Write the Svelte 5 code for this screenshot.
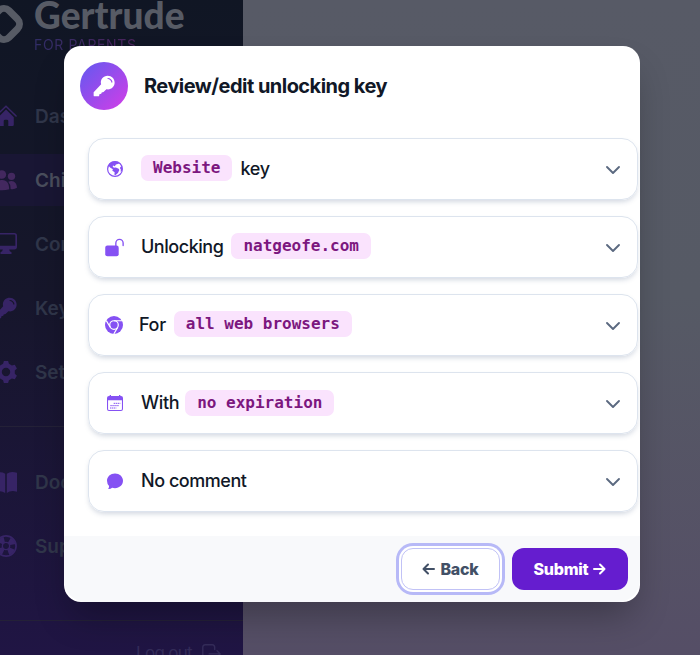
<script>
  const nav = [
    { label: 'Dashboard', icon: 'home' },
    { label: 'Children', icon: 'people', active: true },
    { label: 'Computers', icon: 'display' },
    { label: 'Keychains', icon: 'key' },
    { label: 'Settings', icon: 'gear' },
  ];
  const links = [
    { label: 'Docs', icon: 'book' },
    { label: 'Support', icon: 'life' },
  ];
  const rows = [
    { icon: 'globe', size: 16, chip: 'Website', after: 'key' },
    { icon: 'unlock', size: 19, before: 'Unlocking', chip: 'natgeofe.com' },
    { icon: 'chrome', size: 18, before: 'For', chip: 'all web browsers' },
    { icon: 'calendar', size: 16, before: 'With', chip: 'no expiration' },
    { icon: 'comment', size: 16, before: 'No comment' },
  ];
</script>

{#snippet icon(name, size)}
  <svg class="icon" width={size} height={size} viewBox="0 0 24 24" fill="currentColor" stroke="none">
    {#if name === 'home'}
      <path d="M12 5 3.500 13.300V21.500Q3.500 23 5 23H9.500V17.500Q9.500 16 11 16H13Q14.500 16 14.500 17.500V23H19Q20.500 23 20.500 21.500V13.300Z" />
      <path d="M1 12 12 1.300 23 12" fill="none" stroke="currentColor" stroke-width="1.700" stroke-linecap="round" stroke-linejoin="round" />
    {:else if name === 'people'}
      <circle cx="7.500" cy="6" r="4.700" /><circle cx="18" cy="8" r="4" />
      <path d="M0 22C0 15 3 12 8 12S15.500 16 15.500 22Q8 24.500 0 22ZM14.500 14C20 11 24 15.500 24 20.500Q21 22.500 17 21.800Q17.200 17 14.500 14Z" />
    {:else if name === 'display'}
      <path fill-rule="evenodd" d="M3 0H21Q24 0 24 3V15Q24 18 21 18H15.500Q15.600 20.500 18 21V23H6V21Q8.400 20.500 8.500 18H3Q0 18 0 15V3Q0 0 3 0ZM3 1.700Q1.800 1.700 1.800 3V14H22.200V3Q22.200 1.700 21 1.700Z" />
    {:else if name === 'key'}
      <path fill-rule="evenodd" d="M1.700 23.300Q.7 23.300.7 22.300V18.800L8.900 10.200C7.400 4.700 11.300.7 16 .7C20.500.7 23.600 4 23.600 8.200C23.600 12.800 19.800 16.600 14.600 15.600L11.500 18.600L9.500 19L9 20.500L7 21L6.600 23.300ZM15.700 4.200C18.200 4.600 19.800 6.200 20.200 8.500L21.300 8C21 5.200 18.900 3.300 16 3.300Z" />
    {:else if name === 'gear'}
      <path fill-rule="evenodd" d="M9.700 0H14.300L15.200 3.100L18.400 4.900L21.600 4.100L23.900 8.100L21.600 10.400V13.800L23.900 16L21.600 20L18.400 19.100L15.200 21L14.300 24H9.700L8.800 21L5.600 19.100L2.400 20L.1 16L2.400 13.800V10.400L.1 8.100L2.400 4.100L5.600 4.900L8.800 3.100ZM12 7.400A4.600 4.600 0 1 0 12 16.600A4.600 4.600 0 1 0 12 7.400Z" />
    {:else if name === 'book'}
      <path d="M0 3Q6-.2 11.100 3V24Q6 20.500 0 23ZM12.900 3Q17-.2 24 2V22.500Q17 20.500 12.900 24Z" />
    {:else if name === 'life'}
      <circle cx="12" cy="12" r="11" fill="none" stroke="currentColor" stroke-width="1.800" />
      <circle cx="12" cy="12" r="7" fill="none" stroke="currentColor" stroke-width="7" stroke-dasharray="5.500 5.500" stroke-dashoffset="-2.750" />
      <circle cx="12" cy="12" r="4" fill="none" stroke="currentColor" stroke-width="1.500" />
    {:else if name === 'logout'}
      <g fill="none" stroke="currentColor" stroke-width="1.800" stroke-linecap="round" stroke-linejoin="round">
        <path d="M16 7V4Q16 1 13 1H4Q1 1 1 4V20Q1 23 4 23H13Q16 23 16 20V18M9 12.500H23M19 8.500 23 12.500 19 16.500" />
      </g>
    {:else if name === 'globe'}
      <circle cx="12" cy="12" r="11.100" fill="none" stroke="currentColor" stroke-width="1.800" />
      <path d="M2.500 5.500Q6.500 .5 12 .5Q17 .5 19 3Q17 4 15 5Q13 5.200 12.600 6.500Q12 8.200 10.800 7.600Q9.300 6.300 8.500 7.500Q8.500 9 10.500 10.300Q12.500 9 14 10Q18.800 11.300 18.500 13.500Q17.500 18.500 12.500 21.300Q10.500 21.500 11.300 18.500Q12 16.500 10.500 16Q7.800 15.300 8 13.800Q8.200 12.600 9 12.200Q4.500 10.500 2.500 7.500ZM22.500 8Q19 8.500 19.500 11Q21.500 12.500 20.500 16L22.500 15Z" />
    {:else if name === 'unlock'}
      <rect x=".3" y="9.600" width="17" height="13.600" rx="2.700" />
      <path d="M13.700 10V6.400A4.600 4.600 0 0 1 22.900 6.400V9.600" fill="none" stroke="currentColor" stroke-width="1.700" stroke-linecap="round" />
    {:else if name === 'chrome'}
      <circle cx="12" cy="12" r="12" />
      <g fill="none" stroke="#fff" stroke-width="1.600">
        <circle cx="12" cy="12" r="5.700" />
        <path d="M12 6.300H23M7 15 1.700 6.200M17 15 11.700 24" />
      </g>
    {:else if name === 'calendar'}
      <path fill-rule="evenodd" d="M4 0H6V1.500H18V0H20V1.500H21Q24 1.500 24 4.500V21Q24 24 21 24H3Q0 24 0 21V4.500Q0 1.500 3 1.500H4ZM1.600 8V21Q1.600 22.400 3 22.400H21Q22.400 22.400 22.400 21V8Z" />
      <path d="M10 12.500H20M5 16H18M4.500 19.500H14" stroke="currentColor" stroke-width="1.500" stroke-dasharray="2.200 .8" />
    {:else if name === 'comment'}
      <path d="M12 .8C18.700.8 24 5.500 24 11.800S18.700 22.800 12 22.800Q9.600 22.800 7.700 22.100Q5 24.200 1.700 23.800Q3.200 21.800 3.100 19.500Q0 16.500 0 11.800C0 5.500 5.300.8 12 .8Z" />
    {/if}
  </svg>
{/snippet}

<div class="page">
  <aside>
    <div class="brand">
      <svg class="logo" width="50" height="42" viewBox="0 0 50 42"><rect x="16" y="8" width="26" height="26" rx="7" transform="rotate(45 29 21)" /></svg>
      <div class="words">
        <div class="name">Gertrude</div>
        <div class="sub">FOR PARENTS</div>
      </div>
    </div>
    <nav>
      {#each nav as item}
        <div class="link" class:active={item.active}>{@render icon(item.icon, 22)}<span>{item.label}</span></div>
      {/each}
    </nav>
    <nav class="more">
      {#each links as item}
        <div class="link">{@render icon(item.icon, 22)}<span>{item.label}</span></div>
      {/each}
    </nav>
    <div class="logout"><span>Log out</span>{@render icon('logout', 19)}</div>
  </aside>

  <section class="modal">
    <header>
      <div class="badge">{@render icon('key', 22)}</div>
      <h1>Review/edit unlocking key</h1>
    </header>
    <div class="body">
      {#each rows as row}
        <div class="card">
          <span class="slot {row.icon}-slot">{@render icon(row.icon, row.size)}</span>
          <div class="text {row.icon}">
            {#if row.before}<span>{row.before}</span>{/if}
            {#if row.chip}<code>{row.chip}</code>{/if}
            {#if row.after}<span>{row.after}</span>{/if}
          </div>
          <svg class="chev" width="16" height="16" viewBox="0 0 16 16"><path d="M2 6 8 12 14 6" /></svg>
        </div>
      {/each}
    </div>
    <footer>
      <button class="back">
        <svg width="13" height="12" viewBox="0 0 13 12"><path d="M12 6H1.500M6 1.500 1.500 6 6 10.500" /></svg>Back
      </button>
      <button class="submit">
        Submit<svg width="13" height="12" viewBox="0 0 13 12"><path d="M1 6H11.500M7 1.500 11.500 6 7 10.500" /></svg>
      </button>
    </footer>
  </section>
</div>

<style>
  .page { position: relative; width: 700px; height: 655px; overflow: hidden; display: flex; font-family: Inter, sans-serif; background: linear-gradient(#575a66 0%, #565a65 45%, #554e66 100%); }
  .icon { display: block; flex: none; }
  aside { width: 243px; height: 655px; overflow: hidden; display: flex; flex-direction: column; background: linear-gradient(#101624, #16162b 45%, #201544); }
  .brand { display: flex; height: 90px; flex: none; }
  .logo { flex: none; margin: 3px 9px 0 -25px; }
  .logo rect { fill: none; stroke: #575b65; stroke-width: 7; }
  .name { font: 900 37px/40px Lato, sans-serif; color: #575b65; margin-top: -5px; height: 41px; letter-spacing: .05px; }
  .sub { font-size: 14px; line-height: 17px; letter-spacing: .65px; width: max-content; background: linear-gradient(90deg, #302d66, #4c245d); background-clip: text; color: transparent; }
  nav { display: flex; flex-direction: column; gap: 12px; padding-bottom: 28px; border-bottom: 1px solid #242137; }
  .more { padding: 29px 0 48px; }
  .link { display: flex; align-items: center; gap: 18px; height: 52px; margin-left: -5px; color: #372466; }
  .link span { font-size: 19px; font-weight: 600; color: #30364a; }
  .active { background: #191634; color: #43285f; }
  .active span { color: #4a4e5d; }
  .logout { display: flex; gap: 10px; margin: 22px 0 0 136px; align-items: center; font-size: 17px; line-height: 20px; color: #342c59; flex: none; }
  .logout span { letter-spacing: -.7px; }
  .modal { position: absolute; left: 64px; top: 46px; width: 576px; height: 556px; border-radius: 17px; background: #fff; box-shadow: 0 20px 36px -8px rgba(0,0,0,.3); display: flex; flex-direction: column; }
  header { display: flex; align-items: center; gap: 16px; padding: 16px 16px 0; }
  .badge { width: 48px; height: 48px; border-radius: 50%; background: linear-gradient(135deg, #6159f0, #d43de7); display: flex; align-items: center; justify-content: center; color: #fff; }
  h1 { margin: 0; font-size: 20px; line-height: 28px; font-weight: 700; letter-spacing: -.53px; color: #111827; }
  .body { display: flex; flex-direction: column; gap: 16px; padding: 28px 2px 0 24px; flex: 1; }
  .card { box-sizing: border-box; height: 62px; border: 1px solid #dde4ee; border-radius: 16px; display: flex; align-items: center; padding: 0 16px 0 18px; box-shadow: 0 3px 5px -1px rgba(100,120,150,.28); }
  .slot { width: 34px; color: #8551f3; display: flex; }
  .unlock-slot { margin-left: -2px; width: 36px; }
  .chrome-slot { margin-left: -2px; width: 34px; padding-bottom: 1px; }
  .text { flex: 1; display: flex; align-items: center; gap: 8px; font-size: 18px; line-height: 28px; font-weight: 450; letter-spacing: -.46px; color: #111827; }
  .text.calendar { gap: 6px; }
  .text.chrome, .text.globe, .text.calendar { letter-spacing: -.35px; }
  code { font: 700 16px/24px "DejaVu Sans Mono", monospace; letter-spacing: 0; padding: 1px 12px; border-radius: 7px; background: #fae3fd; color: #7c177f; margin-top: -2px; }
  .calendar code { margin-top: 0; }
  .chev path { fill: none; stroke: #5b6980; stroke-width: 1.900; stroke-linecap: round; stroke-linejoin: round; }
  footer { height: 66px; box-sizing: border-box; padding: 12px; display: flex; justify-content: flex-end; gap: 12px; background: #f8f9fb; border-radius: 0 0 22px 22px; }
  button { font: 800 16px/20px Inter, sans-serif; height: 42px; border-radius: 12px; border: 0; display: flex; align-items: center; justify-content: center; gap: 5px; padding: 0; letter-spacing: -.25px; }
  button path { fill: none; stroke: currentColor; stroke-width: 2; stroke-linecap: round; stroke-linejoin: round; }
  .back { width: 99px; color: #425066; background: #fff; border: 1px solid #c1c2f6; box-shadow: 0 0 0 2px #fff, 0 0 0 5px #b7b9f7; }
  .submit { width: 116px; color: #fff; background: #651dcf; }
</style>
